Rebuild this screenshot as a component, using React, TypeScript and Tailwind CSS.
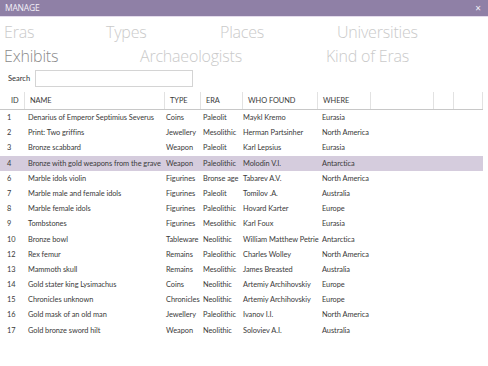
const tabsTop = ['Eras', 'Types', 'Places', 'Universities'];

const rows = [
  ['1', 'Denarius of Emperor Septimius Severus', 'Coins', 'Paleolit', 'Maykl Kremo', 'Eurasia'],
  ['2', 'Print: Two griffins', 'Jewellery', 'Mesolithic', 'Herman Partsinher', 'North America'],
  ['3', 'Bronze scabbard', 'Weapon', 'Paleolit', 'Karl Lepsius', 'Eurasia'],
  ['4', 'Bronze with gold weapons from the grave', 'Weapon', 'Paleolithic', 'Molodin V.I.', 'Antarctica'],
  ['6', 'Marble idols violin', 'Figurines', 'Bronse age', 'Tabarev A.V.', 'North America'],
  ['7', 'Marble male and female idols', 'Figurines', 'Paleolit', 'Tomilov .A.', 'Australia'],
  ['8', 'Marble female idols', 'Figurines', 'Paleolithic', 'Hovard Karter', 'Europe'],
  ['9', 'Tombstones', 'Figurines', 'Mesolithic', 'Karl Foux', 'Eurasia'],
  ['10', 'Bronze bowl', 'Tableware', 'Neolithic', 'William Matthew Petrie', 'Antarctica'],
  ['12', 'Rex femur', 'Remains', 'Paleolithic', 'Charles Wolley', 'North America'],
  ['13', 'Mammoth skull', 'Remains', 'Mesolithic', 'James Breasted', 'Australia'],
  ['14', 'Gold stater king Lysimachus', 'Coins', 'Neolithic', 'Artemiy Archihovskiy', 'Europe'],
  ['15', 'Chronicles unknown', 'Chronicles', 'Neolithic', 'Artemiy Archihovskiy', 'Europe'],
  ['16', 'Gold mask of an old man', 'Jewellery', 'Paleolithic', 'Ivanov I.I.', 'North America'],
  ['17', 'Gold bronze sword hilt', 'Weapon', 'Neolithic', 'Soloviev A.I.', 'Australia'],
];

const cols = 'grid grid-cols-[25px_140px_36px_42px_75px_53px_63px_20px_29px]';

export default function App() {
  return (
    <div className="w-[488px] h-[366px] bg-white overflow-hidden font-['Open_Sans',sans-serif] text-[#333]">
      {/* title bar */}
      <div className="h-[17px] bg-[#8f80a6] border-b border-[#e4dcec] flex items-center justify-between pl-[5px] pr-[7px]">
        <span className="text-[8.5px] text-[#f4f0f8] tracking-[-0.2px]">MANAGE</span>
        <span className="text-[10px] leading-none text-[#f4f0f8]">×</span>
      </div>

      {/* navigation */}
      <div className="pl-[4px] pt-[3px] font-light text-[16px] leading-[24px] tracking-[-0.2px]">
        <div className="flex text-[#cacaca]">
          <span className="w-[102px]">{tabsTop[0]}</span>
          <span className="w-[114px]">{tabsTop[1]}</span>
          <span className="w-[117px]">{tabsTop[2]}</span>
          <span>{tabsTop[3]}</span>
        </div>
        <div className="flex">
          <span className="w-[136px] text-[#8a8a8a]">Exhibits</span>
          <span className="w-[186px] text-[#cacaca]">Archaeologists</span>
          <span className="text-[#cacaca]">Kind of Eras</span>
        </div>
      </div>

      {/* search */}
      <div className="flex items-center h-[17px] mt-[2px] pl-[8px] font-['Lato',sans-serif]">
        <span className="text-[7.5px] w-[27px]">Search</span>
        <div className="w-[158px] h-[17px] border border-[#d4d4d4]" />
      </div>

      {/* table */}
      <div className="mt-[5px] w-[483px] text-[7.4px] tracking-[-0.05px] font-['Lato',sans-serif] text-[#3a3a3a]">
        <div className={`${cols} h-[18px] border-b border-[#c8c8c8] uppercase`}>
          {['ID', 'Name', 'Type', 'Era', 'Who found', 'Where', '', '', ''].map((h, i) => (
            <div
              key={i}
              className={`flex items-center border-r border-[#e2e2e2] ${i === 0 ? 'pl-[11px]' : 'pl-[5px]'}`}
            >
              {h}
            </div>
          ))}
        </div>
        {rows.map((r) => (
          <div
            key={r[0]}
            className={`${cols} h-[15.2px] items-center ${r[0] === '4' ? 'bg-[#d5ccdd]' : ''}`}
          >
            <div className="pl-[7px]">{r[0]}</div>
            <div className="pl-[3px] whitespace-nowrap">{r[1]}</div>
            <div className="pl-[1px] whitespace-nowrap">{r[2]}</div>
            <div className="pl-[2px] whitespace-nowrap">{r[3]}</div>
            <div className="pl-[0px] whitespace-nowrap">{r[4]}</div>
            <div className="pl-[4px] whitespace-nowrap">{r[5]}</div>
            <div />
            <div />
            <div />
          </div>
        ))}
      </div>
    </div>
  );
}
